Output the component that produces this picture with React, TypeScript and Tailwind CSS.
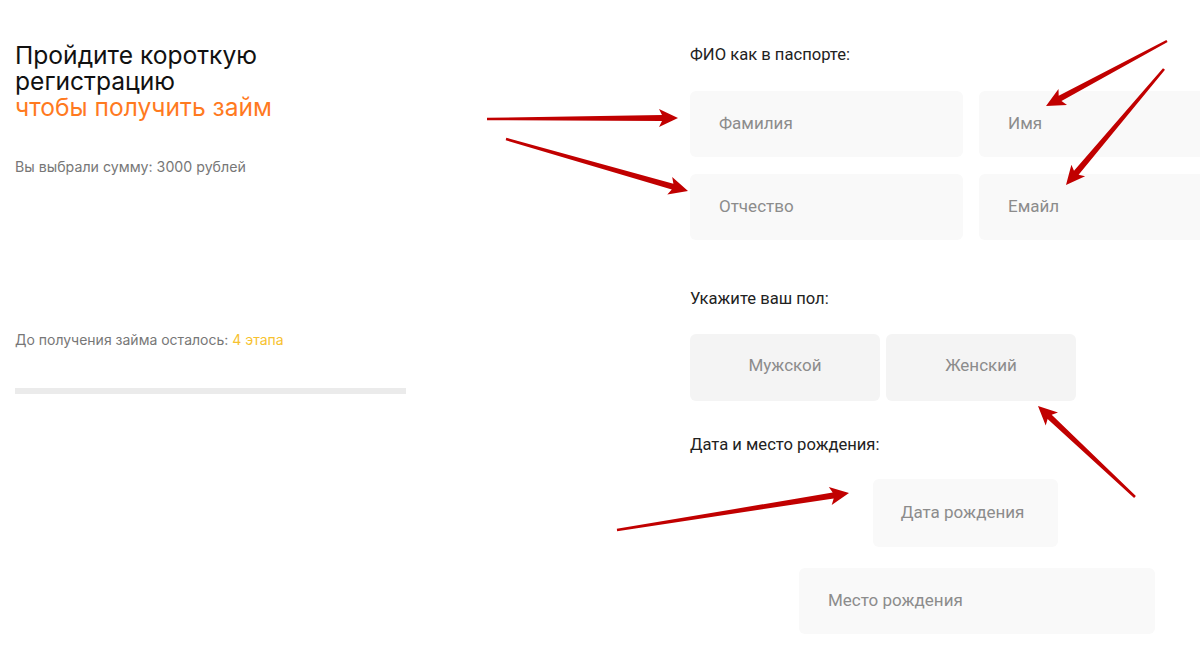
import React from "react";

type Pt = [number, number];

// tapered annotation arrow, drawn as one polygon
function arrowPoints(tail: Pt, tip: Pt, w0 = 2.5, w1 = 6, L = 16, h = 9) {
  const dx = tip[0] - tail[0];
  const dy = tip[1] - tail[1];
  const len = Math.hypot(dx, dy);
  const ux = dx / len;
  const uy = dy / len;
  const nx = -uy;
  const ny = ux;
  const bx = tip[0] - ux * L;
  const by = tip[1] - uy * L;
  const pts: Pt[] = [
    [tail[0] + (nx * w0) / 2, tail[1] + (ny * w0) / 2],
    [bx + (nx * w1) / 2, by + (ny * w1) / 2],
    [bx - ux * 3 + nx * h, by - uy * 3 + ny * h],
    [tip[0], tip[1]],
    [bx - ux * 3 - nx * h, by - uy * 3 - ny * h],
    [bx - (nx * w1) / 2, by - (ny * w1) / 2],
    [tail[0] - (nx * w0) / 2, tail[1] - (ny * w0) / 2],
  ];
  return pts.map((p) => p.map((v) => v.toFixed(1)).join(",")).join(" ");
}

const arrows: { tail: Pt; tip: Pt }[] = [
  { tail: [487, 119], tip: [678, 118] },
  { tail: [506, 139], tip: [688, 191] },
  { tail: [1167, 41], tip: [1046, 106] },
  { tail: [1164, 69], tip: [1066, 185] },
  { tail: [1135, 497], tip: [1038, 406] },
  { tail: [617, 530], tip: [849, 493] },
];

function Field({ label }: { label: string }) {
  return (
    <div className="h-[66px] rounded-[6px] bg-[#f9f9f9] pl-[29px] pb-[1px] flex items-center text-[17px] text-[#8c8c8c]">
      {label}
    </div>
  );
}

export default function App() {
  return (
    <div className="relative w-[1200px] h-[650px] overflow-hidden bg-white flex">
      <div className="w-[690px] shrink-0 pl-[15px] pt-[42px] font-['Inter',sans-serif]">
        <h1 className="text-[24.6px] leading-[26px] text-[#111] font-normal">
          <span className="block">Пройдите короткую</span>
          <span className="block">регистрацию</span>
          <span className="block text-[#ff7a1f]">чтобы получить займ</span>
        </h1>
        <p className="mt-[37px] text-[14.2px] leading-[20px] text-[#777]">
          Вы выбрали сумму: 3000 рублей
        </p>
        <p className="mt-[153px] text-[14px] leading-[20px] text-[#777]">
          До получения займа осталось: <span className="text-[#f7c230]">4 этапа</span>
        </p>
        <div className="mt-[38px] h-[6px] w-[391px] bg-[#ebebeb]" />
      </div>

      <div className="flex-1 pt-[43px] font-['Roboto',sans-serif] text-[#222]">
        <div className="text-[16.6px] leading-[24px]">ФИО как в паспорте:</div>
        <div className="mt-[24px] grid grid-cols-[273px_273px] gap-x-[16px] gap-y-[17px]">
          <Field label="Фамилия" />
          <Field label="Имя" />
          <Field label="Отчество" />
          <Field label="Емайл" />
        </div>

        <div className="mt-[47px] text-[16.6px] leading-[24px]">Укажите ваш пол:</div>
        <div className="mt-[23px] flex gap-[6px]">
          <button className="w-[190px] h-[67px] pb-[3px] rounded-[6px] bg-[#f4f4f4] text-[17px] text-[#8c8c8c]">
            Мужской
          </button>
          <button className="w-[190px] h-[67px] pb-[3px] rounded-[6px] bg-[#f4f4f4] text-[17px] text-[#8c8c8c]">
            Женский
          </button>
        </div>

        <div className="mt-[32px] text-[16.6px] leading-[24px]">Дата и место рождения:</div>
        <div className="mt-[22px] ml-[183px] w-[185px] h-[68px] pr-[6px] pb-[1px] rounded-[6px] bg-[#f9f9f9] flex items-center justify-center text-[17px] text-[#8c8c8c]">
          Дата рождения
        </div>
        <div className="mt-[21px] ml-[109px] w-[356px]">
          <Field label="Место рождения" />
        </div>
      </div>

      <svg className="absolute inset-0 pointer-events-none" width="1200" height="650">
        {arrows.map((a, i) => (
          <polygon key={i} points={arrowPoints(a.tail, a.tip)} fill="#c10000" />
        ))}
      </svg>
    </div>
  );
}
